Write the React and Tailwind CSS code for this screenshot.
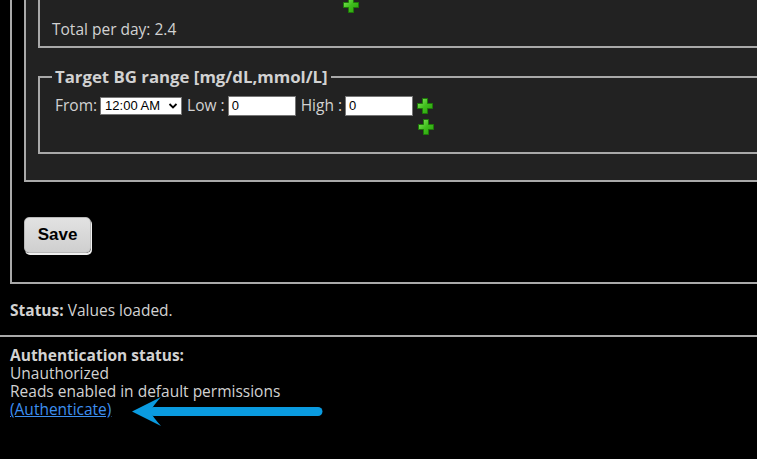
import React from 'react';

// green "add" cross used by the profile editor
function PlusIcon() {
    return (
        <svg width="16" height="16" viewBox="0 0 16 16" className="block">
            <defs>
                <linearGradient id="plusFill" x1="0" y1="0" x2="1" y2="1">
                    <stop offset="0" stopColor="#8fe86a" />
                    <stop offset="0.5" stopColor="#3fbf1c" />
                    <stop offset="1" stopColor="#2a9a0e" />
                </linearGradient>
            </defs>
            <path
                d="M5.5 0.5 H10.5 V5.5 H15.5 V10.5 H10.5 V15.5 H5.5 V10.5 H0.5 V5.5 H5.5 Z"
                fill="url(#plusFill)"
                stroke="#1e7a08"
                strokeWidth="1"
            />
        </svg>
    );
}

function TimeSelect() {
    return (
        <div className="flex h-[18px] w-[82px] items-center justify-between border border-[#767676] bg-white pl-[4px] pr-[3px] font-['Liberation_Sans',Arial,sans-serif] text-[13px] text-black">
            <span>12:00 AM</span>
            <svg width="10" height="10" viewBox="0 0 10 10">
                <path d="M1.5 3 L5 6.5 L8.5 3" fill="none" stroke="#000" strokeWidth="1.8" />
            </svg>
        </div>
    );
}

function NumberBox() {
    return (
        <div className="flex h-[20px] w-[68px] items-center border border-[#767676] bg-white pl-[3px] font-['Liberation_Sans',Arial,sans-serif] text-[13px] text-black">
            0
        </div>
    );
}

export default function App() {
    return (
        <div className="relative h-[459px] w-[757px] overflow-hidden bg-black font-['Open_Sans',sans-serif] text-[15.5px] text-[#d2d2d2]">
            <div className="pl-[10px]">
                {/* --- Profile form (scrolled, top cut off) --- */}
                <div className="w-[800px] border-b-2 border-l-2 border-[#a9a9a9] pl-3 pb-[29px]">
                    <div className="border-b-2 border-l-2 border-[#a9a9a9] bg-[#222] pl-3 pr-3 pb-[26px]">
                        {/* basal fieldset, only its bottom shows */}
                        <div className="h-[51px] border-b-2 border-l-2 border-[#a9a9a9] pl-[12px]">
                            <div className="-mt-[3px] ml-[291px]">
                                <PlusIcon />
                            </div>
                            <div className="mt-[7px] leading-[18px]">Total per day: 2.4</div>
                        </div>

                        {/* target range */}
                        <fieldset className="mt-[19px] h-[87px] border-2 border-[#a9a9a9] pl-[15px]">
                            <legend className="-ml-[3px] px-[3px] text-[16.8px] font-bold leading-[20px] text-[#d2d2d2]">
                                Target BG range [mg/dL,mmol/L]
                            </legend>
                            <div className="mt-[7px] flex items-center">
                                <span>From:</span>
                                <div className="ml-[3px]">
                                    <TimeSelect />
                                </div>
                                <span className="ml-[5px]">Low :</span>
                                <div className="ml-[3px]">
                                    <NumberBox />
                                </div>
                                <span className="ml-[5px]">High :</span>
                                <div className="ml-[3px]">
                                    <NumberBox />
                                </div>
                                <div className="ml-[4px]">
                                    <PlusIcon />
                                </div>
                            </div>
                            <div className="ml-[363px] mt-[2px]">
                                <PlusIcon />
                            </div>
                        </fieldset>
                    </div>

                    <button className="mt-[35px] h-[36px] w-[67px] rounded-[5px] border border-[#b8b8b8] bg-gradient-to-b from-[#e2e2e2] to-[#cfcfcf] font-['Liberation_Sans',Arial,sans-serif] text-[17px] font-bold text-black shadow-[1px_2px_0_#f0f0f0]">
                        Save
                    </button>
                </div>
            </div>

            {/* --- Status --- */}
            <div className="mt-[17px] pl-[10px] leading-[18px]">
                <span className="font-bold">Status:</span> Values loaded.
            </div>
            <div className="mt-[16px] h-[2px] w-full bg-[#a9a9a9]" />

            <div className="mt-[9px] pl-[10px] leading-[18px]">
                <div className="font-bold">Authentication status:</div>
                <div>Unauthorized</div>
                <div>Reads enabled in default permissions</div>
                <a href="#" className="text-[#3d8ff0] underline">
                    (Authenticate)
                </a>
            </div>

            {/* annotation arrow */}
            <svg className="absolute left-[130px] top-[395px]" width="200" height="34" viewBox="0 0 200 34">
                <line x1="24" y1="16.5" x2="188" y2="16.5" stroke="#0a9be0" strokeWidth="9" strokeLinecap="round" />
                <path d="M2 16.5 L31 2 Q23 11 20 16.5 Q23 22 31 31 Z" fill="#0a9be0" />
            </svg>
        </div>
    );
}
